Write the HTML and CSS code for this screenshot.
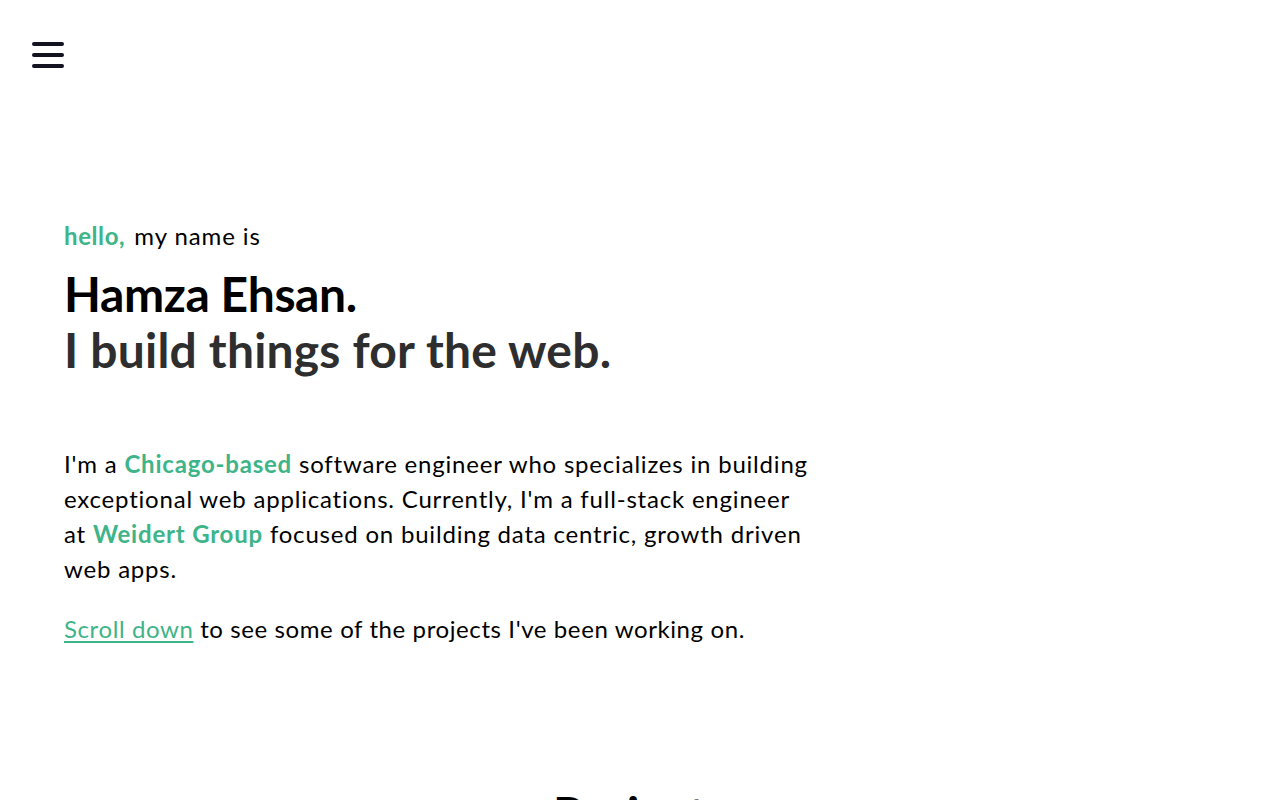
FILE: index.html
```html
<!DOCTYPE html>
<html lang="en">
<head>
<meta charset="utf-8">
<title>Hamza Ehsan</title>
<link rel="stylesheet" href="styles.css">
</head>
<body>
<header class="topbar">
  <button class="menu-btn" aria-label="Open menu">
    <svg width="34" height="28" viewBox="0 0 34 28" fill="none" stroke="#13121f" stroke-width="4" stroke-linecap="round">
      <line x1="3" y1="3" x2="31" y2="3"/>
      <line x1="3" y1="14" x2="31" y2="14"/>
      <line x1="3" y1="25" x2="31" y2="25"/>
    </svg>
  </button>
</header>
<main>
  <section class="intro">
    <p class="greeting"><strong class="accent">hello,</strong> my name is</p>
    <h1 class="title">
      <span class="name">Hamza Ehsan.</span>
      <span class="tagline">I build things for the web.</span>
    </h1>
    <p class="about">I'm a <strong class="accent">Chicago-based</strong> software engineer who specializes in building<br>exceptional web applications. Currently, I'm a full-stack engineer<br>at <strong class="accent">Weidert Group</strong> focused on building data centric, growth driven<br>web apps.</p>
    <p class="about about-scroll"><a class="link" href="#projects">Scroll down</a> to see some of the projects I've been working on.</p>
  </section>
  <section class="projects" id="projects">
    <h2 class="projects-title">Projects</h2>
  </section>
</main>
</body>
</html>
```
FILE: styles.css
```css
* { box-sizing: border-box; }
html, body { margin: 0; padding: 0; }
body {
  font-family: "Lato", "Open Sans", sans-serif;
  color: #000;
  background: #fff;
}
.topbar {
  padding: 41px 0 0 31px;
  height: 82px;
}
.menu-btn {
  border: 0;
  background: none;
  padding: 0;
  display: block;
  cursor: pointer;
}
.menu-btn svg { display: block; }
.intro {
  padding: 138px 64px 0;
}
.greeting {
  margin: 0;
  font-size: 24px;
  line-height: 32px;
  letter-spacing: 0.9px;
}
.greeting .accent { letter-spacing: 0.6px; margin-right: 2px; }
.accent { color: #3eb489; font-weight: 700; }
.title {
  margin: 14px 0 0;
  font-size: 48px;
  line-height: 56px;
  font-weight: 700;
}
.title span { display: block; }
.name { color: #000; letter-spacing: -0.4px; }
.tagline { color: #2e2e2e; letter-spacing: 0.2px; }
.about {
  margin: 68px 0 0;
  font-size: 24px;
  line-height: 35px;
  letter-spacing: 0.8px;
}
.about + .about { margin-top: 25px; }
.about-scroll { letter-spacing: 0.6px; }
.link { color: #3eb489; text-decoration: underline; text-underline-offset: 3px; }
.projects {
  padding-top: 140px;
  text-align: center;
}
.projects-title {
  margin: 0;
  font-size: 48px;
  line-height: 56px;
  font-weight: 700;
}
```
